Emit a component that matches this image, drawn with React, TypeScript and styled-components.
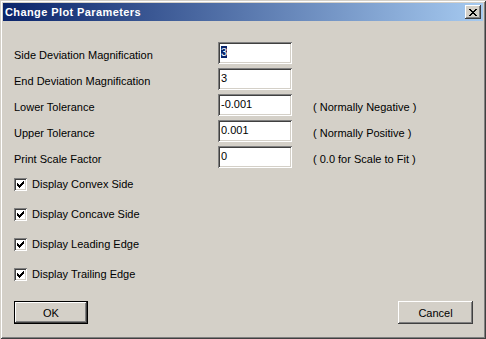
import React from "react";
import styled, { createGlobalStyle } from "styled-components";

const GlobalStyle = createGlobalStyle`
  html, body {
    margin: 0;
    padding: 0;
    background: #d4d0c8;
  }
  body {
    font-family: Tahoma, "Liberation Sans", Arial, sans-serif;
    font-size: 11px;
    color: #000;
  }
`;

interface IField {
  label: string;
  value: string;
  hint?: string;
  selected?: boolean;
}

const fields: IField[] = [
  { label: "Side Deviation Magnification", value: "3", selected: true },
  { label: "End Deviation Magnification", value: "3" },
  { label: "Lower Tolerance", value: "-0.001", hint: "( Normally Negative )" },
  { label: "Upper Tolerance", value: "0.001", hint: "( Normally Positive )" },
  { label: "Print Scale Factor", value: "0", hint: "( 0.0 for Scale to Fit )" },
];

const options = [
  "Display Convex Side",
  "Display Concave Side",
  "Display Leading Edge",
  "Display Trailing Edge",
];

const CloseIcon = () => (
  <svg width="8" height="7" viewBox="0 0 8 7" shapeRendering="crispEdges">
    <path
      d="M0 0h2v1H0zM6 0h2v1H6zM1 1h2v1H1zM5 1h2v1H5zM2 2h4v1H2zM3 3h2v1H3zM2 4h4v1H2zM1 5h2v1H1zM5 5h2v1H5zM0 6h2v1H0zM6 6h2v1H6z"
      fill="#000"
    />
  </svg>
);

const CheckMark = () => (
  <svg width="7" height="7" viewBox="0 0 7 7" shapeRendering="crispEdges">
    <path
      d="M6 0h1v3H6zM5 1h1v3H5zM4 2h1v3H4zM3 3h1v3H3zM2 4h1v3H2zM1 3h1v3H1zM0 2h1v3H0z"
      fill="#000"
    />
  </svg>
);

const App = () => {
  return (
    <>
      <GlobalStyle />
      <Window>
        <TitleBar>
          <Title>Change Plot Parameters</Title>
          <CloseButton>
            <CloseIcon />
          </CloseButton>
        </TitleBar>
        <Body>
          <Form>
            {fields.map(f => (
              <React.Fragment key={f.label}>
                <Label>{f.label}</Label>
                <Input>
                  {f.selected ? <Selection>{f.value}</Selection> : f.value}
                </Input>
                <Hint>{f.hint}</Hint>
              </React.Fragment>
            ))}
          </Form>
          <Options>
            {options.map(o => (
              <OptionRow key={o}>
                <CheckBox>
                  <CheckMark />
                </CheckBox>
                <span>{o}</span>
              </OptionRow>
            ))}
          </Options>
          <ButtonRow>
            <Button isDefault>OK</Button>
            <Button>Cancel</Button>
          </ButtonRow>
        </Body>
      </Window>
    </>
  );
};

export default App;

const Window = styled.div`
  box-sizing: border-box;
  width: 486px;
  height: 339px;
  padding: 3px;
  background: #d4d0c8;
  display: flex;
  flex-direction: column;
  box-shadow:
    inset 1px 1px 0 #d4d0c8,
    inset -1px -1px 0 #404040,
    inset 2px 2px 0 #ffffff,
    inset -2px -2px 0 #808080;
`;

const TitleBar = styled.div`
  height: 18px;
  display: flex;
  align-items: center;
  justify-content: space-between;
  padding: 0 2px 0 2px;
  background: linear-gradient(to right, #0a246a, #a6caf0);
`;

const Title = styled.div`
  color: #fff;
  font-weight: bold;
  font-size: 11px;
  letter-spacing: 0.4px;
`;

const CloseButton = styled.div`
  box-sizing: border-box;
  width: 16px;
  height: 14px;
  background: #d4d0c8;
  display: flex;
  align-items: center;
  justify-content: center;
  box-shadow:
    inset -1px -1px 0 #404040,
    inset 1px 1px 0 #ffffff,
    inset -2px -2px 0 #808080;
`;

const Body = styled.div`
  flex: 1;
  display: flex;
  flex-direction: column;
  padding: 21px 10px 0 11px;
`;

const Form = styled.div`
  display: grid;
  grid-template-columns: 204px 74px auto;
  grid-auto-rows: 22px;
  row-gap: 4px;
  align-items: center;
`;

const Label = styled.div`
  padding-top: 3px;
`;

const Input = styled.div`
  box-sizing: border-box;
  height: 22px;
  background: #fff;
  padding: 3px 3px 0 3px;
  line-height: 14px;
  box-shadow:
    inset 1px 1px 0 #808080,
    inset -1px -1px 0 #ffffff,
    inset 2px 2px 0 #404040,
    inset -2px -2px 0 #d4d0c8;
`;

const Selection = styled.span`
  background: #0a246a;
  color: #fff;
`;

const Hint = styled.div`
  padding: 3px 0 0 21px;
`;

const Options = styled.div`
  margin-top: 1px;
  display: flex;
  flex-direction: column;
`;

const OptionRow = styled.div`
  height: 30px;
  display: flex;
  align-items: center;
  gap: 5px;
`;

const CheckBox = styled.div`
  box-sizing: border-box;
  width: 13px;
  height: 13px;
  background: #fff;
  display: flex;
  align-items: center;
  justify-content: center;
  box-shadow:
    inset 1px 1px 0 #808080,
    inset -1px -1px 0 #ffffff,
    inset 2px 2px 0 #404040,
    inset -2px -2px 0 #d4d0c8;
`;

const ButtonRow = styled.div`
  margin-top: 12px;
  display: flex;
  justify-content: space-between;
`;

const Button = styled.div<{ isDefault?: boolean }>`
  box-sizing: border-box;
  width: ${p => (p.isDefault ? "74px" : "75px")};
  height: 23px;
  display: flex;
  align-items: center;
  justify-content: center;
  background: #d4d0c8;
  border: ${p => (p.isDefault ? "1px solid #000" : "none")};
  box-shadow:
    inset -1px -1px 0 #404040,
    inset 1px 1px 0 #ffffff,
    inset -2px -2px 0 #808080;
`;
